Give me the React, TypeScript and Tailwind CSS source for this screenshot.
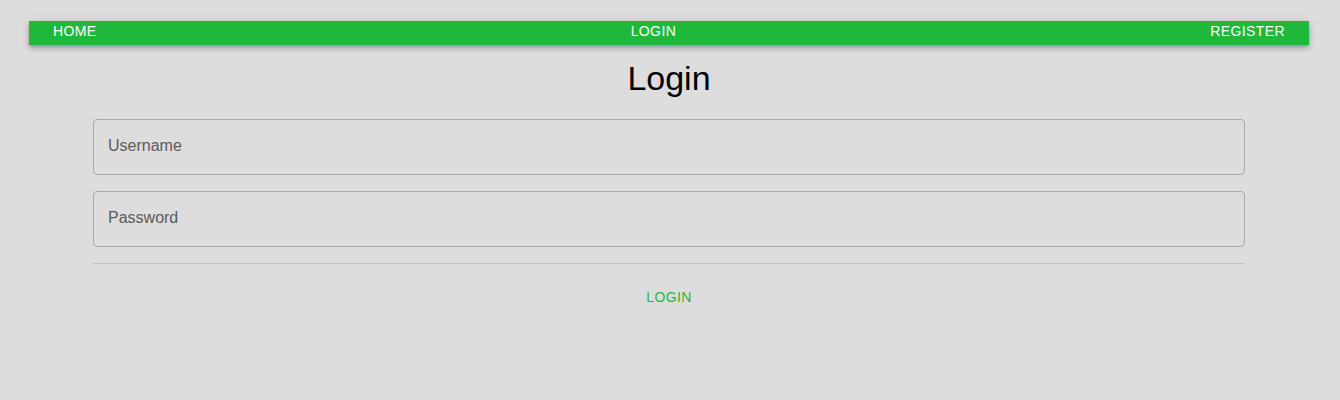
export default function App() {
  return (
    <div className="min-h-[400px] bg-[#dddddd] font-['Liberation_Sans',Arial,sans-serif] pt-[21px] pr-[2px]">
      <nav className="mx-auto w-[1280px] h-6 bg-[#1eb83b] flex items-center justify-between px-6 pb-1 text-[14px] tracking-[0.4px] text-white shadow-[0_2px_4px_-1px_rgba(0,0,0,0.2),0_4px_5px_0_rgba(0,0,0,0.14),0_1px_10px_0_rgba(0,0,0,0.12)]">
        <a href="#">HOME</a>
        <a href="#">LOGIN</a>
        <a href="#">REGISTER</a>
      </nav>
      <h1 className="text-center text-[34px] leading-[42px] text-black mt-3">Login</h1>
      <form className="mx-auto w-[1152px] mt-[20px] flex flex-col gap-4">
        <input
          placeholder="Username"
          className="h-14 w-full rounded border border-[#aaaaaa] bg-transparent px-[14px] pb-[3px] text-[16px] text-black placeholder:text-[#5a5a5a] outline-none"
        />
        <input
          type="password"
          placeholder="Password"
          className="h-14 w-full rounded border border-[#aaaaaa] bg-transparent px-[14px] pb-[3px] text-[16px] text-black placeholder:text-[#5a5a5a] outline-none"
        />
        <hr className="border-t border-[#c1c1c1]" />
        <button type="button" className="mx-auto h-9 px-2 pb-[2px] text-[14px] tracking-[0.4px] text-[#1eb83b]">
          LOGIN
        </button>
      </form>
    </div>
  )
}
